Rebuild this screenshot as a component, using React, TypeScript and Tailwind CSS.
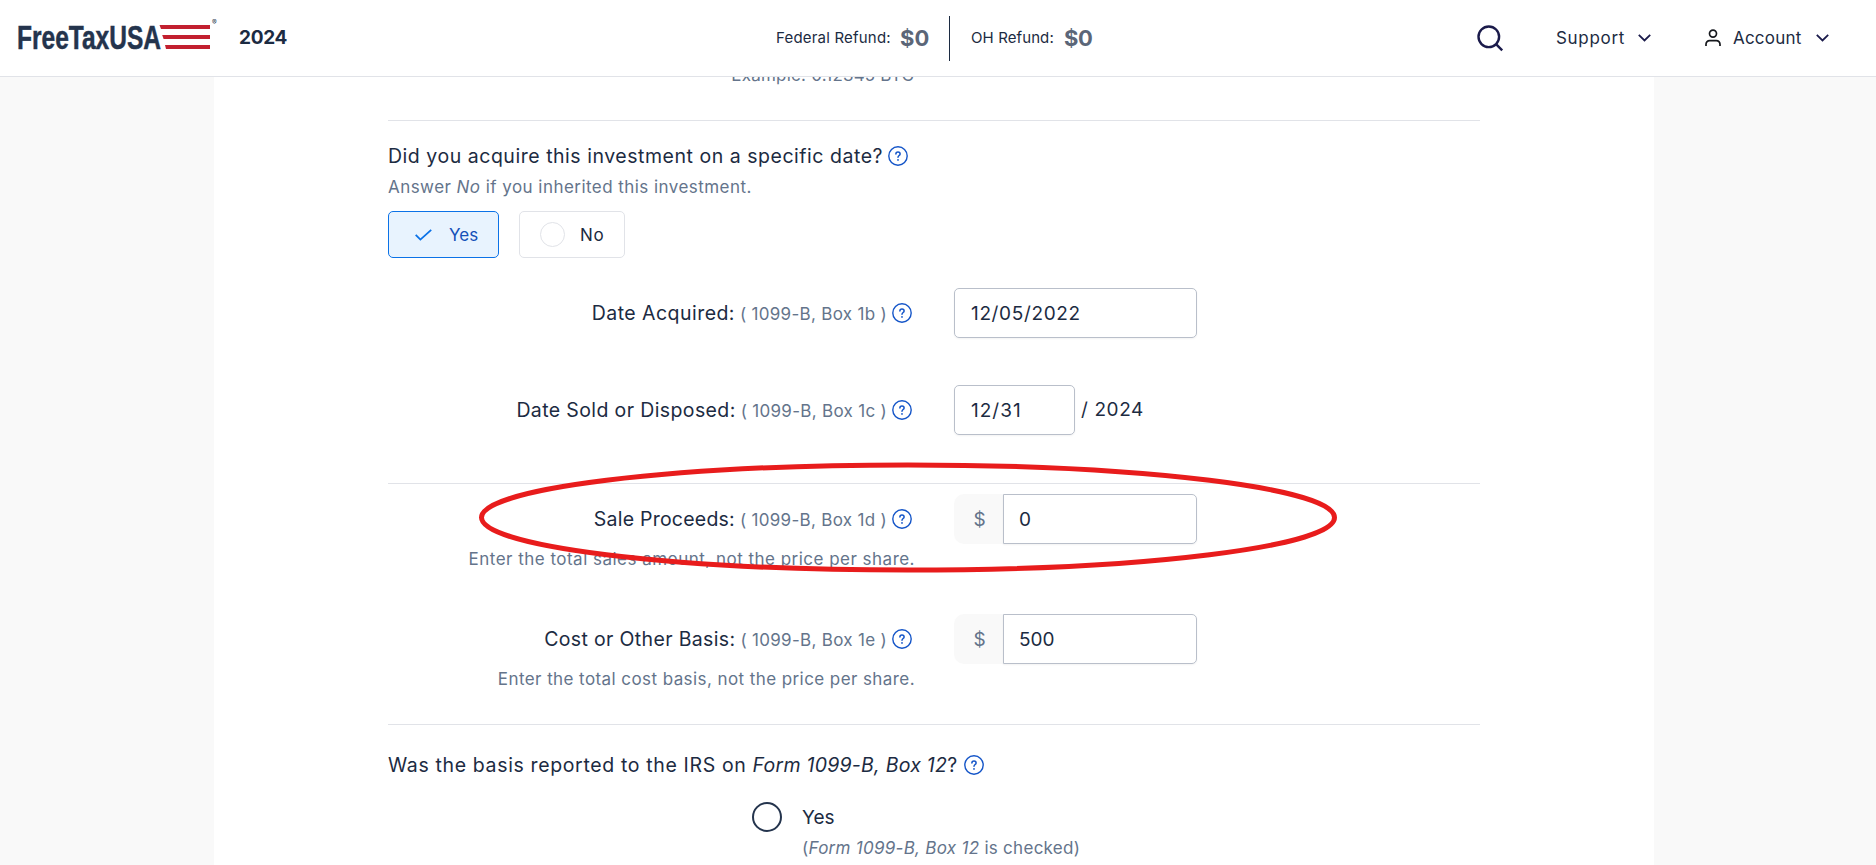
import React from 'react';

const HelpIcon: React.FC = () => (
  <svg className="w-5 h-5 shrink-0" viewBox="0 0 20 20" fill="none" stroke="#1455c8" strokeWidth="1.4">
    <circle cx="10" cy="10" r="9.2" />
    <path d="M7.9 8.1c0-1.3.9-2.1 2.1-2.1s2.1.8 2.1 1.9c0 1.6-2.1 1.7-2.1 3.4" strokeWidth="1.5" strokeLinecap="round" />
    <circle cx="10" cy="13.9" r="0.9" fill="#1455c8" stroke="none" />
  </svg>
);

const ChevronIcon: React.FC = () => (
  <svg className="w-[13px] h-2 shrink-0" viewBox="0 0 13 8" fill="none" stroke="#1b1b4b" strokeWidth="1.8">
    <path d="M0.8 0.9 6.5 6.5l5.7-5.6" />
  </svg>
);

const Logo: React.FC = () => (
  <svg className="w-[205px] h-[40px]" viewBox="0 0 205 40">
    <text
      x="0"
      y="31.5"
      textLength="144"
      lengthAdjust="spacingAndGlyphs"
      fontFamily="Liberation Sans Narrow, Liberation Sans, sans-serif"
      fontWeight="bold"
      fontSize="33"
      fill="#24344d"
      stroke="#24344d"
      strokeWidth="0.5"
    >
      FreeTaxUSA
    </text>
    <g fill="#c2202f">
      <path d="M142.5 8H193v4h-49z" />
      <path d="M145.2 18H193v4h-46.4z" />
      <path d="M148 28H193v4h-44z" />
    </g>
    <text x="195" y="8" fontFamily="Inter, sans-serif" fontSize="7" fill="#24344d">®</text>
  </svg>
);

interface FieldRowProps {
  label: string;
  box: string;
  labelClass: string;
  children: React.ReactNode;
}

const FieldRow: React.FC<FieldRowProps> = ({ label, box, labelClass, children }) => (
  <div className="flex items-center h-[50px]">
    <div className="flex items-center justify-end w-[526px] pr-0.5 whitespace-nowrap">
      <div className="flex items-baseline">
        <span className={`text-[19.5px] leading-7 ${labelClass}`}>{label}</span>
        <span className="ml-[5px] mr-[5px] text-[17px] tracking-[0.3px] text-[#64748b]">( 1099-B, {box} )</span>
      </div>
      <HelpIcon />
    </div>
    <div className="flex items-center ml-10 h-[50px]">{children}</div>
  </div>
);

const MoneyInput: React.FC<{ value: string }> = ({ value }) => (
  <>
    <span className="flex items-center justify-center w-[49px] h-[50px] pt-0.5 pl-0.5 rounded-l-[10px] bg-[#f9f9f9] text-[19px] text-[#64748b]">$</span>
    <span className="flex items-center w-[194px] h-[50px] pt-0.5 pl-[15px] border border-[#b9bfca] rounded-r-[5px] text-[19px] shadow-xs">{value}</span>
  </>
);

const Hint: React.FC<{ className: string; children: React.ReactNode }> = ({ className, children }) => (
  <p className={`w-[527px] mt-[3px] text-right text-[17px] leading-6 whitespace-nowrap text-[#64748b] ${className}`}>{children}</p>
);

const Header: React.FC = () => (
  <header className="flex items-center h-[77px] border-b border-[#e1e3e8] bg-white">
    <div className="flex items-center w-[776px] pl-[17px] pb-0.5">
      <Logo />
      <span className="ml-[17px] pt-0.5 text-[19px] font-bold tracking-[-0.3px]">2024</span>
    </div>
    <div className="flex items-center w-[701px] whitespace-nowrap">
      <span className="w-[124px] text-[15px] tracking-[0.2px]">Federal Refund:</span>
      <span className="w-[49px] text-[22px] font-bold text-[#5b6678]">$0</span>
      <span className="w-px h-[45px] mr-[21px] bg-[#1c2b42]" />
      <span className="w-[93px] text-[15px] tracking-[0.1px]">OH Refund:</span>
      <span className="text-[22px] font-bold tracking-[-0.3px] text-[#5b6678]">$0</span>
    </div>
    <svg className="w-[27px] h-[27px]" viewBox="0 0 27 27" fill="none" stroke="#1b1b4b" strokeWidth="2.4">
      <circle cx="11.8" cy="11.8" r="10.3" />
      <path d="m18.8 18.8 6.4 6.6" />
    </svg>
    <div className="flex items-center w-[95px] ml-[52px] justify-between text-[17px]">
      <span className="pt-0.5 tracking-[0.7px]">Support</span>
      <ChevronIcon />
    </div>
    <div className="flex items-center w-[124px] ml-[54px] text-[17px]">
      <svg className="w-4 h-[18px] mr-3 shrink-0" viewBox="0 0 16 18" fill="none" stroke="#16181d" strokeWidth="1.7">
        <circle cx="8" cy="4.6" r="3.5" />
        <path d="M1 17v-1.8a3.6 3.6 0 0 1 3.6-3.6h6.8a3.6 3.6 0 0 1 3.6 3.6V17" />
      </svg>
      <span className="grow pt-0.5 tracking-[0.2px]">Account</span>
      <ChevronIcon />
    </div>
  </header>
);

const App: React.FC = () => {
  return (
    <div className="relative w-full h-[865px] overflow-hidden bg-[#f9f9f9] font-['Inter',sans-serif] text-[#1c2b42]">
      <Header />
      <main className="w-[1440px] h-[788px] ml-[214px] pl-[174px] overflow-hidden bg-white">
        <p className="w-[526px] -mt-[14px] text-right text-[17px] leading-6 tracking-[0.2px] text-[#64748b]">Example: 0.12345 BTC</p>
        <hr className="w-[1092px] mt-[33px] border-[#e1e3e8]" />

        <h2 className="flex items-center mt-[21px] text-[19.5px] leading-7 whitespace-nowrap">
          <span className="mr-[5px] tracking-[0.53px]">Did you acquire this investment on a specific date?</span>
          <HelpIcon />
        </h2>
        <p className="mt-[5px] text-[17px] leading-6 tracking-[0.45px] text-[#64748b]">
          Answer <i>No</i> if you inherited this investment.
        </p>

        <div className="flex gap-5 mt-[12px] text-[17px]">
          <button className="flex items-center w-[111px] h-[47px] pl-[26px] gap-[17px] border border-[#0b72e7] rounded-[5px] bg-[#e8f3fe] text-[#1450b8]">
            <svg className="w-[17px] h-3" viewBox="0 0 17 12" fill="none" stroke="#0b72e7" strokeWidth="1.8">
              <path d="M0.7 5.8 5.4 10.6 16.2 0.8" />
            </svg>
            <span className="pt-0.5">Yes</span>
          </button>
          <button className="flex items-center w-[106px] h-[47px] pl-5 gap-[15px] border border-[#e1e3e8] rounded-[5px]">
            <span className="w-[25px] h-[25px] border border-[#e1e3e8] rounded-full" />
            <span className="pt-0.5 tracking-[0.8px]">No</span>
          </button>
        </div>

        <div className="mt-[30px]">
          <FieldRow label="Date Acquired:" box="Box 1b" labelClass="tracking-[0.46px]">
            <span className="flex items-center w-[243px] h-[50px] pt-0.5 pl-4 border border-[#b9bfca] rounded-[5px] text-[19px] tracking-[0.65px] shadow-xs">12/05/2022</span>
          </FieldRow>
        </div>
        <div className="mt-[47px]">
          <FieldRow label="Date Sold or Disposed:" box="Box 1c" labelClass="tracking-[0.38px]">
            <span className="flex items-center w-[121px] h-[50px] pt-[3px] pl-4 border border-[#b9bfca] rounded-[5px] text-[19px] tracking-[1px] shadow-xs">12/31</span>
            <span className="ml-1.5 pt-px text-[19px] tracking-[0.6px]">/ 2024</span>
          </FieldRow>
        </div>
        <hr className="w-[1092px] mt-[48px] border-[#e1e3e8]" />

        <div className="mt-[10px]">
          <FieldRow label="Sale Proceeds:" box="Box 1d" labelClass="tracking-[0.23px]">
            <MoneyInput value="0" />
          </FieldRow>
          <Hint className="tracking-[0.48px]">Enter the total sales amount, not the price per share.</Hint>
        </div>
        <div className="mt-[43px]">
          <FieldRow label="Cost or Other Basis:" box="Box 1e" labelClass="tracking-[0.35px]">
            <MoneyInput value="500" />
          </FieldRow>
          <Hint className="tracking-[0.42px]">Enter the total cost basis, not the price per share.</Hint>
        </div>
        <hr className="w-[1092px] mt-[33px] border-[#e1e3e8]" />

        <h2 className="flex items-center mt-[26px] text-[19.5px] leading-7 whitespace-nowrap">
          <span className="mr-1.5 tracking-[0.64px]">
            Was the basis reported to the IRS on <i className="tracking-[0.25px]">Form 1099-B, Box 12</i>?
          </span>
          <HelpIcon />
        </h2>
        <div className="flex items-center h-[30px] mt-[23px] ml-[364px] gap-5">
          <span className="w-[30px] h-[30px] border-2 border-[#24344d] rounded-full" />
          <span className="pt-0.5 text-[19px]">Yes</span>
        </div>
        <p className="mt-1 ml-[414px] text-[17px] leading-6 tracking-[0.28px] text-[#64748b]">
          (<i>Form 1099-B, Box 12</i> is checked)
        </p>
      </main>

      {/* highlight ring over the sale proceeds row */}
      <svg className="absolute left-[478px] top-[461px] w-[860px] h-[113px]" viewBox="0 0 860 113" fill="none">
        <ellipse cx="430" cy="56.5" rx="426.5" ry="52.6" stroke="#e81c1c" strokeWidth="5" />
      </svg>
    </div>
  );
};

export default App;
